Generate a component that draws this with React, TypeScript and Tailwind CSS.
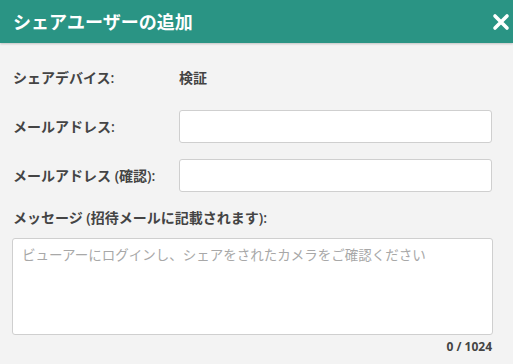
import React from "react";

function CloseIcon() {
  return (
    <svg width="18" height="18" viewBox="0 0 18 18" className="block">
      <path d="M3 3 L15 15 M15 3 L3 15" stroke="white" strokeWidth="3.6" strokeLinecap="round" />
    </svg>
  );
}

export default function App() {
  return (
    <div
      className="w-[513px] h-[364px] bg-[#f3f3f3] overflow-hidden"
      style={{ fontFamily: '"Open Sans", "Noto Sans CJK JP", sans-serif' }}
    >
      {/* Header */}
      <div className="h-[43px] bg-[#2a9484] flex items-center justify-between pl-[13px] pr-[3px] shadow-[0_1px_2px_rgba(0,0,0,0.2)] relative z-10">
        <h1 className="text-white font-bold text-[18px] leading-none">シェアユーザーの追加</h1>
        <CloseIcon />
      </div>

      {/* Body */}
      <div className="pt-[18px] pl-[13px] pr-[21px]">
        <div className="flex flex-col gap-[16px]">
          <div className="flex items-center h-[33px]">
            <span className="w-[166px] text-[14px] font-semibold text-[#444]">シェアデバイス:</span>
            <span className="text-[14px] font-semibold text-[#444]">検証</span>
          </div>
          <div className="flex items-center h-[33px]">
            <span className="w-[166px] text-[14px] font-semibold text-[#444]">メールアドレス:</span>
            <input className="flex-1 h-[33px] bg-white border border-[#cfcfcf] rounded-[3px] outline-none px-2" />
          </div>
          <div className="flex items-center h-[33px]">
            <span className="w-[166px] text-[14px] font-semibold text-[#444]">メールアドレス (確認):</span>
            <input className="flex-1 h-[33px] bg-white border border-[#cfcfcf] rounded-[3px] outline-none px-2" />
          </div>
        </div>

        <div className="mt-[17px] text-[14px] font-semibold text-[#444] leading-[18px]">
          メッセージ (招待メールに記載されます):
        </div>
        <textarea
          className="mt-[11px] -ml-[1px] block w-[481px] h-[97px] bg-white border border-[#cfcfcf] rounded-[3px] outline-none resize-none px-[9px] py-[6px] text-[13.5px] placeholder:text-[#a8a8a8]"
          placeholder="ビューアーにログインし、シェアをされたカメラをご確認ください"
        />
        <div className="text-right text-[12px] font-bold text-[#444] mt-[4px] leading-[16px]">0 / 1024</div>
      </div>
    </div>
  );
}
